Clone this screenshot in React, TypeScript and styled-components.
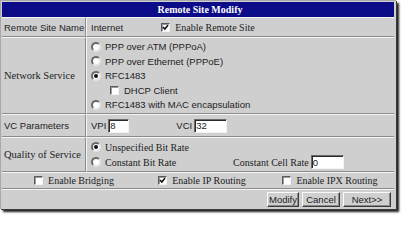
import React from 'react'
import styled, { createGlobalStyle } from 'styled-components'

const sans = `'Liberation Sans', Arial, sans-serif`
const serif = `'Liberation Serif', 'Times New Roman', serif`

const GlobalStyle = createGlobalStyle`
  html, body {
    margin: 0;
    padding: 0;
    background: #fff;
  }
  body {
    width: 409px;
    height: 222px;
    overflow: hidden;
  }
`

const Panel = styled.div`
  box-sizing: border-box;
  width: 396px;
  padding: 1px 2px 1px 1px;
  background: #cfcfcf;
  border-top: 1px solid #a8a8a8;
  border-left: 1px solid #a8a8a8;
  box-shadow: 1px 1px 0 #3a3a3a, 3px 3px 2px #1c1c1c;
`

const TitleBar = styled.div`
  height: 15px;
  background: #0c0c88;
  color: #fff;
  font: bold 10px ${serif};
  display: flex;
  align-items: center;
  justify-content: center;
  padding-left: 4px;
`

const FormGrid = styled.div`
  display: grid;
  grid-template-columns: 84px 1fr;
`

const LabelCell = styled.div<{ $serif?: boolean; $h: number }>`
  height: ${p => p.$h}px;
  box-sizing: border-box;
  display: flex;
  align-items: center;
  padding-left: 2px;
  border-bottom: 1px solid #8c8c8c;
  border-right: 1px solid #8c8c8c;
  border-top: 1px solid #f4f4f4;
  font: ${p => (p.$serif ? `10.5px ${serif}` : `9.5px ${sans}`)};
  color: #222;
  white-space: nowrap;
`

const ValueCell = styled.div<{ $h: number }>`
  height: ${p => p.$h}px;
  box-sizing: border-box;
  display: flex;
  flex-direction: column;
  justify-content: center;
  padding-left: 4px;
  border-bottom: 1px solid #8c8c8c;
  border-top: 1px solid #f4f4f4;
  border-left: 1px solid #f4f4f4;
`

const Line = styled.div<{ $h?: number; $indent?: number }>`
  display: flex;
  align-items: center;
  height: ${p => p.$h ?? 14.5}px;
  padding-left: ${p => p.$indent ?? 0}px;
  white-space: nowrap;
`

const Text = styled.span<{ $serif?: boolean; $gap?: number }>`
  font: ${p => (p.$serif ? `10px ${serif}` : `9.5px ${sans}`)};
  color: #222;
  margin-left: ${p => p.$gap ?? 0}px;
`

const Radio = styled.span<{ $checked?: boolean }>`
  position: relative;
  flex: none;
  box-sizing: border-box;
  width: 10px;
  height: 10px;
  border-radius: 50%;
  background: #fff;
  border: 2px solid;
  border-color: #6a6a6a #e6e6e6 #e6e6e6 #6a6a6a;
  margin-right: 4px;

  &::after {
    content: '';
    display: ${p => (p.$checked ? 'block' : 'none')};
    position: absolute;
    left: 1px;
    top: 1px;
    width: 4px;
    height: 4px;
    border-radius: 50%;
    background: #111;
  }
`

const Box = styled.span<{ $left?: number }>`
  flex: none;
  box-sizing: border-box;
  width: 9px;
  height: 9px;
  background: #fff;
  border: 1px solid;
  border-color: #5a5a5a #f2f2f2 #f2f2f2 #5a5a5a;
  box-shadow: inset 1px 1px 0 #9a9a9a;
  margin-left: ${p => p.$left ?? 0}px;
  margin-right: 5px;
  display: flex;
  align-items: center;
  justify-content: center;
`

const Check = ({ checked, left }: { checked?: boolean; left?: number }) => (
  <Box $left={left}>
    {checked && (
      <svg width="7" height="7" viewBox="0 0 7 7">
        <polyline points="1,3 2.8,5 6,1.2" fill="none" stroke="#111" strokeWidth="1.6" />
      </svg>
    )}
  </Box>
)

const Field = styled.input<{ $w: number }>`
  box-sizing: border-box;
  width: ${p => p.$w}px;
  height: 14px;
  margin: 0 0 0 2px;
  padding: 0 1px;
  background: #fff;
  border: 1px solid;
  border-color: #6a6a6a #f4f4f4 #f4f4f4 #6a6a6a;
  box-shadow: inset 1px 1px 0 #2a2a2a;
  font: 9.5px ${sans};
  color: #222;
  outline: none;
`

const OptionsRow = styled.div`
  height: 17px;
  box-sizing: border-box;
  display: grid;
  grid-template-columns: repeat(3, 1fr);
  justify-items: center;
  align-items: center;
  padding-left: 8px;
  border-top: 1px solid #f4f4f4;
  border-bottom: 1px solid #8c8c8c;
`

const OptionItem = styled.div`
  display: flex;
  align-items: center;
  white-space: nowrap;
`

const ButtonRow = styled.div`
  display: flex;
  justify-content: flex-end;
  align-items: center;
  gap: 3px;
  height: 18px;
  padding-right: 3px;
  border-top: 1px solid #f4f4f4;
`

const Button = styled.button<{ $w: number }>`
  box-sizing: border-box;
  width: ${p => p.$w}px;
  height: 15px;
  padding: 0;
  background: #cfcfcf;
  border: 1px solid;
  border-color: #fafafa #3a3a3a #3a3a3a #fafafa;
  box-shadow: inset -1px -1px 0 #8a8a8a;
  font: 9.5px ${sans};
  color: #222;
`

export default function App() {
  return (
    <>
      <GlobalStyle />
      <Panel>
        <TitleBar>Remote Site Modify</TitleBar>
        <FormGrid>
          <LabelCell $h={20}>Remote Site Name</LabelCell>
          <ValueCell $h={20}>
            <Line>
              <Text>Internet</Text>
              <Check checked left={38} />
              <Text $serif>Enable Remote Site</Text>
            </Line>
          </ValueCell>

          <LabelCell $h={77} $serif>Network Service</LabelCell>
          <ValueCell $h={77}>
            <Line>
              <Radio />
              <Text>PPP over ATM (PPPoA)</Text>
            </Line>
            <Line>
              <Radio />
              <Text>PPP over Ethernet (PPPoE)</Text>
            </Line>
            <Line>
              <Radio $checked />
              <Text>RFC1483</Text>
            </Line>
            <Line $indent={19}>
              <Check />
              <Text>DHCP Client</Text>
            </Line>
            <Line>
              <Radio />
              <Text>RFC1483 with MAC encapsulation</Text>
            </Line>
          </ValueCell>

          <LabelCell $h={23}>VC Parameters</LabelCell>
          <ValueCell $h={23}>
            <Line>
              <Text>VPI</Text>
              <Field $w={21} defaultValue="8" />
              <Text $gap={47}>VCI</Text>
              <Field $w={33} defaultValue="32" />
            </Line>
          </ValueCell>

          <LabelCell $h={35} $serif>Quality of Service</LabelCell>
          <ValueCell $h={35}>
            <Line $h={15}>
              <Radio $checked />
              <Text $serif>Unspecified Bit Rate</Text>
            </Line>
            <Line $h={15}>
              <Radio />
              <Text $serif>Constant Bit Rate</Text>
              <Text $serif $gap={57}>Constant Cell Rate</Text>
              <Field $w={33} defaultValue="0" />
            </Line>
          </ValueCell>
        </FormGrid>

        <OptionsRow>
          <OptionItem>
            <Check />
            <Text $serif>Enable Bridging</Text>
          </OptionItem>
          <OptionItem>
            <Check checked />
            <Text $serif>Enable IP Routing</Text>
          </OptionItem>
          <OptionItem>
            <Check />
            <Text $serif>Enable IPX Routing</Text>
          </OptionItem>
        </OptionsRow>

        <ButtonRow>
          <Button $w={32}>Modify</Button>
          <Button $w={38}>Cancel</Button>
          <Button $w={48}>Next&gt;&gt;</Button>
        </ButtonRow>
      </Panel>
    </>
  )
}
